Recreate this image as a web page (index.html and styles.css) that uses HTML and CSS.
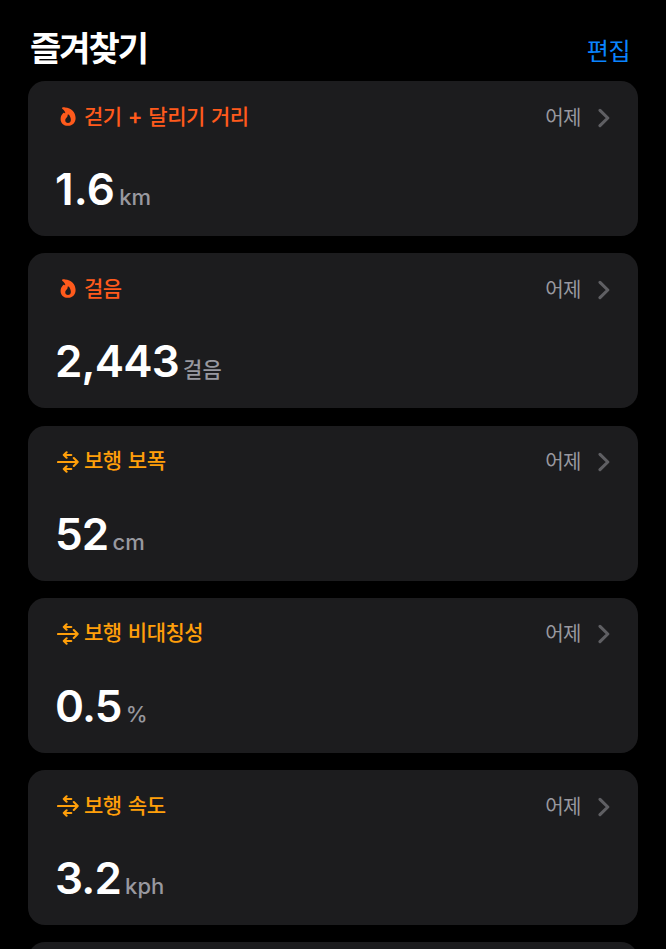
FILE: index.html
```html
<!DOCTYPE html>
<html lang="ko">
<head>
    <meta charset="UTF-8">
    <title>즐겨찾기</title>
    <link rel="stylesheet" href="styles.css">
</head>
<body>

<svg class="symbols">
    <symbol id="flame" viewBox="0 0 16 20">
        <path fill="currentColor" fill-rule="evenodd" d="M1.8 .9 C2.5 .3 3.6 .3 4.8 .4 C11.6 .7 16 5.5 16 11.6 C16 16.6 12.7 19.8 8 19.8 C3.3 19.8 .2 16.8 .2 12.5 C.2 9.8 1.4 7.8 3 6.3 C3.5 5.8 4 5.9 4.3 6.3 C4.9 6.9 5.2 6.6 5.1 6 C4.9 4.3 3.6 3 2.2 2 C1.7 1.7 1.4 1.3 1.8 .9 Z M7.8 8 C7.5 8.3 7.8 9 7.4 10 C6.8 11.3 5.1 12 5.1 14 C5.1 15.8 6.3 16.8 8 16.8 C9.8 16.8 11 15.6 11 13.6 C11 11.2 9.8 8.9 8.5 8 C8.2 7.8 8 7.8 7.8 8 Z"/>
    </symbol>
    <symbol id="walk" viewBox="0 0 22 22">
        <path fill="none" stroke="currentColor" stroke-width="2.1" stroke-linecap="round" stroke-linejoin="round" d="M1 11 H20 M16.8 7 L20.7 11 L16.8 15 M7 4 H14.3 M9.6 1.3 L6.8 4 L9.6 6.7 M7 18 H14.3 M9.6 15.3 L6.8 18 L9.6 20.7"/>
    </symbol>
    <symbol id="chevron" viewBox="0 0 12 20">
        <path fill="none" stroke="currentColor" stroke-width="3.1" stroke-linecap="round" stroke-linejoin="round" d="M2 2.3 L9.8 10 L2 17.7"/>
    </symbol>
</svg>

<header class="header">
    <h1>즐겨찾기</h1>
    <a class="edit">편집</a>
</header>

<main class="cards">
    <section class="card activity">
        <div class="card-top">
            <svg class="icon flame"><use href="#flame"/></svg>
            <h2>걷기 <span class="plus">+</span> 달리기 거리</h2>
            <span class="day">어제</span>
            <svg class="chevron"><use href="#chevron"/></svg>
        </div>
        <p class="reading"><span class="value distance">1.6</span><span class="unit">km</span></p>
    </section>

    <section class="card activity">
        <div class="card-top">
            <svg class="icon flame"><use href="#flame"/></svg>
            <h2>걸음</h2>
            <span class="day">어제</span>
            <svg class="chevron"><use href="#chevron"/></svg>
        </div>
        <p class="reading"><span class="value">2,443</span><span class="unit steps">걸음</span></p>
    </section>

    <section class="card mobility">
        <div class="card-top">
            <svg class="icon"><use href="#walk"/></svg>
            <h2>보행 보폭</h2>
            <span class="day">어제</span>
            <svg class="chevron"><use href="#chevron"/></svg>
        </div>
        <p class="reading"><span class="value">52</span><span class="unit">cm</span></p>
    </section>

    <section class="card mobility">
        <div class="card-top">
            <svg class="icon"><use href="#walk"/></svg>
            <h2>보행 비대칭성</h2>
            <span class="day">어제</span>
            <svg class="chevron"><use href="#chevron"/></svg>
        </div>
        <p class="reading"><span class="value">0.5</span><span class="unit">%</span></p>
    </section>

    <section class="card mobility">
        <div class="card-top">
            <svg class="icon"><use href="#walk"/></svg>
            <h2>보행 속도</h2>
            <span class="day">어제</span>
            <svg class="chevron"><use href="#chevron"/></svg>
        </div>
        <p class="reading"><span class="value">3.2</span><span class="unit">kph</span></p>
    </section>

    <section class="card"></section>
</main>

</body>
</html>
```
FILE: styles.css
```css
* {
    box-sizing: border-box;
}

body {
    margin: 0;
    background: #000;
    color: #fff;
    font-family: Inter, "Noto Sans CJK KR", sans-serif;
}

h1, h2, p {
    margin: 0;
}

.symbols {
    display: none;
}

.header {
    display: flex;
    justify-content: space-between;
    height: 81px;
    padding: 25px 36px 0 30px;
}

h1 {
    font-size: 34px;
    line-height: 48px;
    font-weight: 700;
    letter-spacing: -2px;
}

.edit {
    font-size: 24px;
    line-height: 54px;
    letter-spacing: -0.5px;
    color: #0a84ff;
}

.cards {
    display: flex;
    flex-direction: column;
    gap: 17.3px;
    height: calc(100vh - 81px);
    padding: 0 28px;
    overflow: hidden;
}

.card {
    flex: none;
    height: 155px;
    padding: 20px 27px 0;
    border-radius: 17px;
    background: #1c1c1e;
}

.card-top {
    display: flex;
    align-items: center;
    height: 32px;
}

.icon {
    width: 22px;
    height: 22px;
    margin: 0 5px 0 2px;
}

.icon.flame {
    height: 19px;
    margin-bottom: 1px;
}

.activity .card-top {
    color: #ff5a1c;
}

.mobility .card-top {
    color: #ff9f0a;
}

h2 {
    font-size: 21px;
    line-height: 31px;
    font-weight: 500;
    letter-spacing: -0.5px;
    word-spacing: 1.1px;
    padding-bottom: 2px;
}

.plus {
    font-weight: 600;
    font-size: 22px;
    line-height: 1;
}

.day {
    margin-left: auto;
    padding-top: 1px;
    font-size: 20px;
    line-height: 32px;
    letter-spacing: -0.5px;
    color: #98989f;
}

.chevron {
    width: 12px;
    height: 20px;
    margin: 1px 1px 0 17px;
    color: #5f5f63;
}

.reading {
    display: flex;
    align-items: baseline;
    height: 60px;
    margin-top: 26px;
    line-height: 60px;
}

.value {
    font-size: 44px;
    font-weight: 600;
    letter-spacing: -0.8px;
}

.value.distance {
    letter-spacing: 0.2px;
}

.unit {
    margin-left: 4px;
    font-size: 22px;
    font-weight: 500;
    color: #98989f;
}

.unit.steps {
    font-size: 21px;
}
```
